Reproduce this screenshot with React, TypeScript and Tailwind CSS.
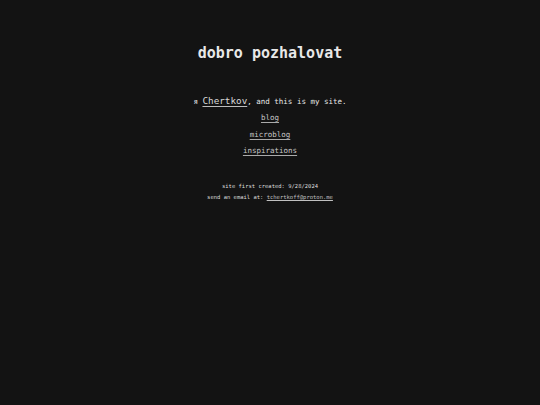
const mono = "font-['DejaVu_Sans_Mono','Liberation_Mono',monospace]";

export default function App() {
  return (
    <div className={`min-h-[405px] w-full bg-[#131313] text-[#e8e8e8] ${mono}`}>
      <div className="flex flex-col items-center pt-[43px]">
        {/* Title */}
        <h1 className="text-[15px] font-bold leading-[20px]">dobro pozhalovat</h1>

        {/* Intro */}
        <p className="mt-[32px] text-[7.5px] leading-[12px]">
          я{" "}
          <a href="#" className="text-[9.3px] text-[#d8d8d8] underline decoration-[#bdbdbd] underline-offset-2">
            Chertkov
          </a>
          , and this is my site.
        </p>

        {/* Links */}
        <nav className="mt-[4px] flex flex-col items-center gap-[4.5px] text-[7.5px] leading-[12px] text-[#c8c8c8]">
          <a href="#" className="underline decoration-[#aaaaaa] underline-offset-2">blog</a>
          <a href="#" className="underline decoration-[#aaaaaa] underline-offset-2">microblog</a>
          <a href="#" className="underline decoration-[#aaaaaa] underline-offset-2">inspirations</a>
        </nav>

        {/* Footer */}
        <div className="mt-[25px] flex flex-col items-center gap-[3px] text-[5.5px] leading-[8px] text-[#dcdcdc]">
          <p>site first created: 9/28/2024</p>
          <p>
            send an email at:{" "}
            <a href="#" className="text-[#c0c0c0] underline underline-offset-1">tchertkoff@proton.me</a>
          </p>
        </div>
      </div>
    </div>
  );
}
